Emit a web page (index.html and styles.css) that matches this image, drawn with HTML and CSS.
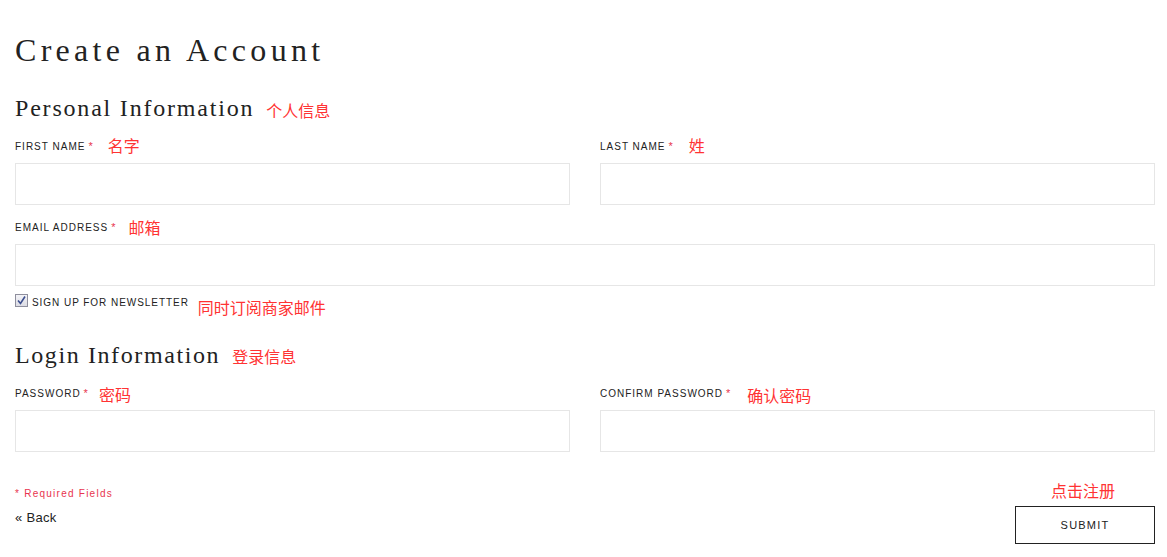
FILE: index.html
```html
<!DOCTYPE html>
<html lang="en">
<head>
<meta charset="utf-8">
<title>Create an Account</title>
<link rel="stylesheet" href="styles.css">
</head>
<body>
<div class="page">
  <h1 class="title">Create an Account</h1>

  <h2 class="section">Personal Information <span class="note note-h">个人信息</span></h2>

  <div class="row">
    <div class="field">
      <div class="label-row"><span class="label">FIRST NAME</span><span class="req">*</span><span class="note n-first">名字</span></div>
      <div class="input"></div>
    </div>
    <div class="field">
      <div class="label-row"><span class="label">LAST NAME</span><span class="req">*</span><span class="note n-last">姓</span></div>
      <div class="input"></div>
    </div>
  </div>

  <div class="field full">
    <div class="label-row"><span class="label">EMAIL ADDRESS</span><span class="req">*</span><span class="note n-email">邮箱</span></div>
    <div class="input"></div>
  </div>

  <div class="check-row">
    <span class="checkbox"><svg width="11" height="11" viewBox="0 0 11 11"><path d="M2 5.5 L4.5 8.5 L9 1.5" fill="none" stroke="#3d4f8f" stroke-width="1.6"/></svg></span>
    <span class="check-label">SIGN UP FOR NEWSLETTER</span>
    <span class="note n-news">同时订阅商家邮件</span>
  </div>

  <h2 class="section login">Login Information <span class="note note-h2">登录信息</span></h2>

  <div class="row">
    <div class="field">
      <div class="label-row"><span class="label">PASSWORD</span><span class="req">*</span><span class="note n-pw">密码</span></div>
      <div class="input"></div>
    </div>
    <div class="field">
      <div class="label-row"><span class="label">CONFIRM PASSWORD</span><span class="req">*</span><span class="note n-cpw">确认密码</span></div>
      <div class="input"></div>
    </div>
  </div>

  <div class="footer">
    <div class="footer-left">
      <div class="required">* Required Fields</div>
      <a class="back" href="#">« Back</a>
    </div>
    <div class="footer-right">
      <div class="note n-submit">点击注册</div>
      <button class="submit" type="button">SUBMIT</button>
    </div>
  </div>
</div>
</body>
</html>
```
FILE: styles.css
```css
* { box-sizing: border-box; }
html, body { margin: 0; padding: 0; background: #fff; }
body { font-family: "Liberation Sans", Arial, sans-serif; color: #222; }
.page { width: 1140px; margin-left: 15px; }

.title {
  font-family: "Liberation Serif", "Times New Roman", serif;
  font-weight: normal;
  font-size: 32px;
  letter-spacing: 4.3px;
  line-height: 40px;
  margin: 30px 0 0;
  color: #222;
}
.section {
  font-family: "Liberation Serif", "Times New Roman", serif;
  font-weight: normal;
  font-size: 24px;
  letter-spacing: 1.8px;
  line-height: 30px;
  margin: 23px 0 0;
  color: #222;
  display: flex;
  align-items: center;
}
.section.login { margin-top: 22px; letter-spacing: 1.6px; }

.note {
  font-family: "Noto Sans CJK SC", "Microsoft YaHei", sans-serif;
  color: #f33;
  font-size: 16px;
  letter-spacing: 0;
  line-height: 20px;
}
.note-h { margin-left: 12px; position: relative; top: 2px; }
.note-h2 { margin-left: 12px; position: relative; top: 1px; }

.row { display: flex; gap: 30px; margin-top: 13px; }
.row .field { flex: 1; }
.field.full { margin-top: 12px; }
.login + .row { margin-top: 13px; }

.label-row { display: flex; align-items: center; height: 20px; margin-bottom: 7px; }
.label { font-size: 10px; letter-spacing: 1px; color: #222; }
.req { color: #e8344e; font-size: 11px; margin-left: 3px; }
.n-first { margin-left: 15px; position: relative; top: -1px; }
.n-last { margin-left: 16px; position: relative; top: -1px; }
.n-email { margin-left: 13px; }
.n-pw { margin-left: 11px; position: relative; top: 1px; }
.n-cpw { margin-left: 17px; position: relative; top: 2px; }

.input { height: 42px; border: 1px solid #e6e6e6; background: #fff; }

.check-row { display: flex; align-items: flex-start; margin-top: 8px; height: 24px; }
.checkbox {
  width: 13px; height: 13px;
  border: 1px solid #8f8f9d;
  background: linear-gradient(#f4f4f8, #dcdce4);
  display: flex; align-items: center; justify-content: center;
}
.check-label { font-size: 10px; letter-spacing: 0.95px; margin-left: 4px; line-height: 13px; margin-top: 2px; }
.n-news { margin-left: 9px; margin-top: 3px; }

.footer { display: flex; justify-content: space-between; align-items: flex-start; margin-top: 28px; }
.footer-left { padding-top: 8px; }
.required { color: #e8344e; font-size: 10px; letter-spacing: 1.25px; line-height: 12px; }
.back { display: block; color: #222; text-decoration: none; font-size: 13px; letter-spacing: 0.3px; margin-top: 10px; line-height: 16px; }
.footer-right { display: flex; flex-direction: column; align-items: center; width: 140px; }
.n-submit { margin-bottom: 6px; margin-right: 4px; }
.submit {
  width: 140px; height: 38px;
  border: 1px solid #222;
  background: #fff;
  font-family: "Liberation Sans", Arial, sans-serif;
  font-size: 11px;
  letter-spacing: 1.2px;
  color: #222;
  padding: 0;
}
```
